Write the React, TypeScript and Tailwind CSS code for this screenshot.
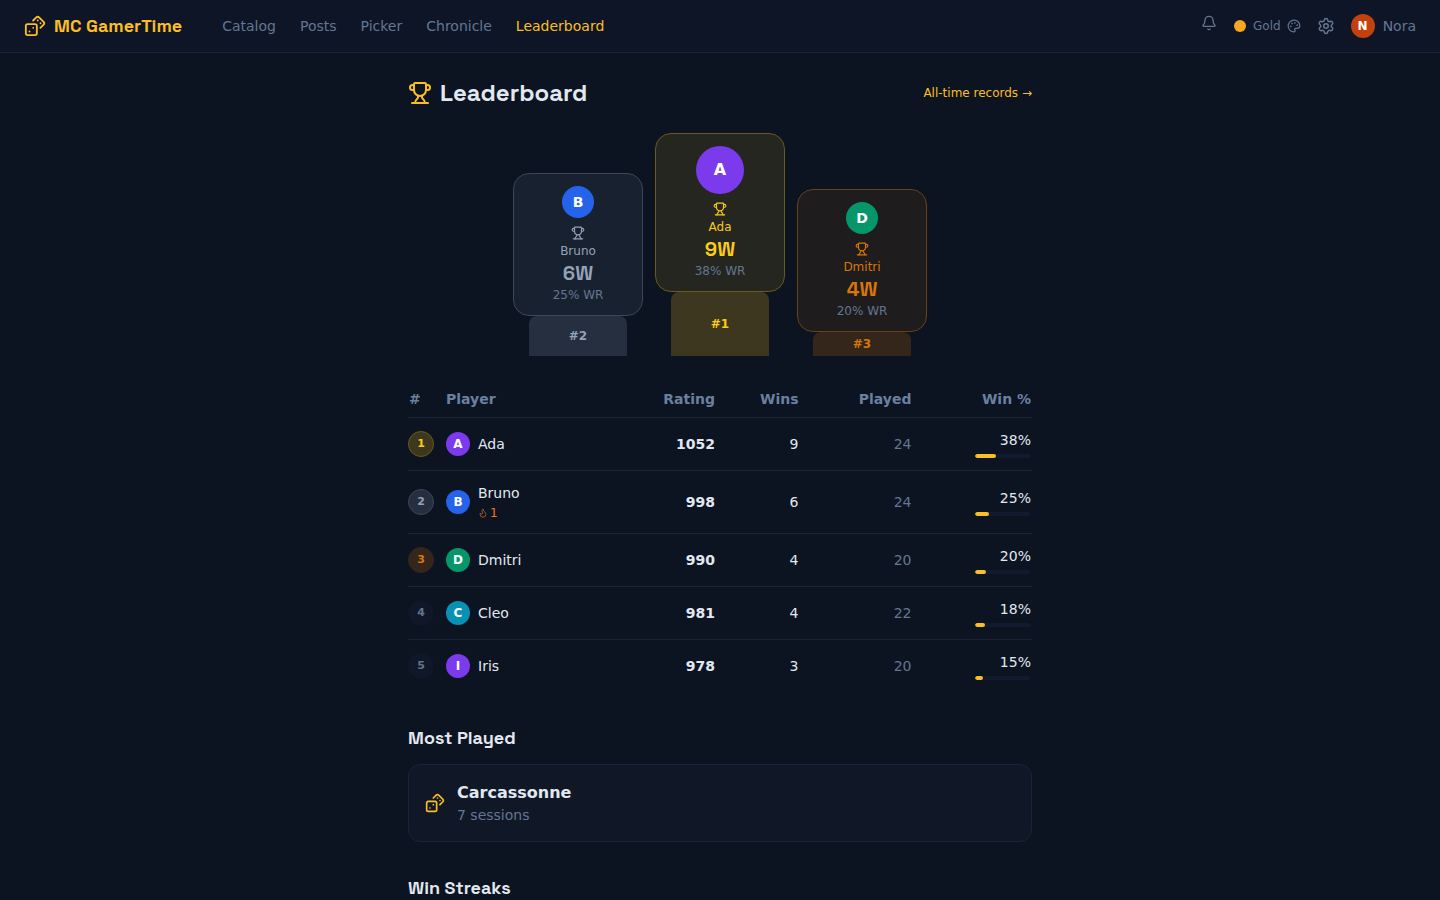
import { Bell, Dices, Flame, Palette, Settings, Trophy } from 'lucide-react';

const body = 'font-["DejaVu_Sans",sans-serif]';
const display = 'font-["Space_Grotesk","Inter",sans-serif]';

const rows = [
  { rank: 1, name: 'Ada', letter: 'A', color: 'bg-[#7c3aed]', rating: 1052, wins: 9, played: 24, pct: 38, badge: 'bg-[#3d3720] border-[#6b5a1c] text-[#facc15]' },
  { rank: 2, name: 'Bruno', letter: 'B', color: 'bg-[#2563eb]', rating: 998, wins: 6, played: 24, pct: 25, streak: 1, badge: 'bg-[#252f3f] border-[#3b4658] text-[#94a3b8]' },
  { rank: 3, name: 'Dmitri', letter: 'D', color: 'bg-[#059669]', rating: 990, wins: 4, played: 20, pct: 20, badge: 'bg-[#35261c] border-[#35261c] text-[#d97706]' },
  { rank: 4, name: 'Cleo', letter: 'C', color: 'bg-[#0891b2]', rating: 981, wins: 4, played: 22, pct: 18, badge: 'bg-[#0f1728] border-[#0f1728] text-[#64748b]' },
  { rank: 5, name: 'Iris', letter: 'I', color: 'bg-[#7c3aed]', rating: 978, wins: 3, played: 20, pct: 15, badge: 'bg-[#0f1728] border-[#0f1728] text-[#64748b]' },
];

function Podium(props: {
  letter: string;
  name: string;
  wins: string;
  wr: string;
  place: string;
  avatar: string;
  big?: boolean;
  card: string;
  tone: string;
  step: string;
  stepClass: string;
}) {
  return (
    <div className="flex w-[130px] flex-col items-center">
      <div className={`flex w-full flex-col items-center rounded-2xl border p-3 ${props.card}`}>
        <div className={`flex items-center justify-center rounded-full font-bold text-white ${props.avatar} ${props.big ? 'h-12 w-12 text-base' : 'h-8 w-8 text-sm'}`}>
          {props.letter}
        </div>
        <Trophy className={`mt-2 h-[14px] w-[14px] ${props.tone}`} strokeWidth={2} />
        <div className={`mt-[3px] text-xs leading-4 ${props.tone}`}>{props.name}</div>
        <div className={`${display} mt-[2px] text-xl font-bold leading-6 ${props.tone}`}>{props.wins}</div>
        <div className="mt-[2px] text-xs leading-4 text-[#647693]">{props.wr}</div>
      </div>
      <div className={`flex w-[98px] items-center justify-center rounded-t-lg text-xs font-bold ${props.step} ${props.stepClass}`}>
        {props.place}
      </div>
    </div>
  );
}

export default function App() {
  return (
    <div className={`min-h-screen bg-[#0c1321] text-[#e2e8f0] ${body}`}>
      <header className="flex h-[53px] items-center justify-between border-b border-[#1a2338] bg-[#0e1526] px-6">
        <div className="flex items-center">
          <div className="flex items-center gap-2">
            <Dices className="h-[22px] w-[22px] text-[#fbbf24]" />
            <span className={`${display} text-lg font-bold text-[#fbbf24]`}>MC GamerTime</span>
          </div>
          <nav className="ml-10 flex items-center gap-6 text-sm text-[#647693]">
            <span>Catalog</span>
            <span>Posts</span>
            <span>Picker</span>
            <span>Chronicle</span>
            <span className="text-[#fbbf24]">Leaderboard</span>
          </nav>
        </div>
        <div className="flex items-center text-sm text-[#647693]">
          <Bell className="mb-[6px] h-4 w-4" />
          <span className="ml-[17px] h-3 w-3 rounded-full bg-[#f5a623]" />
          <span className="ml-[7px] text-xs">Gold</span>
          <Palette className="ml-[6px] h-[14px] w-[14px]" />
          <Settings className="ml-4 h-[18px] w-[18px]" />
          <span className="ml-4 flex h-6 w-6 items-center justify-center rounded-full bg-[#c2410c] text-xs font-bold text-white">N</span>
          <span className="ml-2">Nora</span>
        </div>
      </header>

      <main className="mx-auto max-w-2xl px-6 pt-[22px]">
        <div className="flex items-center justify-between">
          <h1 className={`${display} flex items-center gap-2 text-2xl font-bold leading-9 text-[#e2e8f0]`}>
            <Trophy className="h-6 w-6 text-[#fbbf24]" />
            Leaderboard
          </h1>
          <span className="text-xs text-[#fbbf24]">All-time records →</span>
        </div>

        <div className="mt-[22px] flex items-end justify-center gap-3">
          <Podium letter="B" name="Bruno" wins="6W" wr="25% WR" place="#2" avatar="bg-[#2563eb]" card="border-[#3b4658] bg-[#182130]" tone="text-[#94a3b8]" step="h-10" stepClass="bg-[#252f3f] text-[#94a3b8]" />
          <Podium big letter="A" name="Ada" wins="9W" wr="38% WR" place="#1" avatar="bg-[#7c3aed]" card="border-[#6b5a1c] bg-[#25261f]" tone="text-[#facc15]" step="h-16" stepClass="bg-[#3d3720] text-[#facc15]" />
          <Podium letter="D" name="Dmitri" wins="4W" wr="20% WR" place="#3" avatar="bg-[#059669]" card="border-[#6a4016] bg-[#1f1c1e]" tone="text-[#d97706]" step="h-6" stepClass="bg-[#35261c] text-[#d97706]" />
        </div>

        <div className="mt-[22px] text-sm">
          <div className="grid h-[40px] grid-cols-[38px_1fr_80px_83.5px_113px_120.5px] items-center border-b border-[#1a2338] pt-[2px] font-bold text-[#6b80a0]">
            <span className="pl-px">#</span>
            <span>Player</span>
            <span className="text-right">Rating</span>
            <span className="text-right">Wins</span>
            <span className="text-right">Played</span>
            <span className="pr-px text-right">Win %</span>
          </div>
          {rows.map((r, i) => (
            <div key={r.rank} className={`grid grid-cols-[38px_1fr_80px_83.5px_113px_120.5px] items-center border-b ${r.streak ? 'h-[63px]' : 'h-[53px]'} ${i < rows.length - 1 ? 'border-[#1a2338]' : 'border-transparent'}`}>
              <span className={`flex h-[26px] w-[26px] items-center justify-center rounded-full border text-[11px] font-bold ${r.badge}`}>{r.rank}</span>
              <div className="flex items-center gap-2">
                <span className={`flex h-6 w-6 items-center justify-center rounded-full text-xs font-bold text-white ${r.color}`}>{r.letter}</span>
                <div>
                  <div className="leading-5">{r.name}</div>
                  {r.streak ? (
                    <div className="mt-[2px] flex items-center gap-[2px] text-xs leading-4 text-[#f97316]">
                      <Flame className="h-[10px] w-[10px] text-[#b45f2a]" />
                      {r.streak}
                    </div>
                  ) : null}
                </div>
              </div>
              <span className="text-right font-bold">{r.rating}</span>
              <span className="text-right">{r.wins}</span>
              <span className="text-right text-[#647693]">{r.played}</span>
              <div className="flex flex-col items-end pr-px">
                <span className="leading-5">{r.pct}%</span>
                <div className="mt-1 h-1 w-14 overflow-hidden rounded-full bg-[#111a2e]">
                  <div className="h-full rounded-full bg-[#fbbf24]" style={{ width: `${r.pct}%` }} />
                </div>
              </div>
            </div>
          ))}
        </div>

        <h2 className={`${display} mt-[31px] text-lg font-bold leading-7 text-[#e2e8f0]`}>Most Played</h2>
        <div className="mt-3 flex h-[78px] items-center gap-3 rounded-xl border border-[#1a2338] bg-[#101828] px-4">
          <Dices className="h-5 w-5 text-[#fbbf24]" />
          <div>
            <div className="text-base font-bold leading-6">Carcassonne</div>
            <div className="text-sm leading-5 text-[#647693]">7 sessions</div>
          </div>
        </div>

        <h2 className={`${display} mt-8 pb-6 text-lg font-bold leading-7 text-[#e2e8f0]`}>Win Streaks</h2>
      </main>
    </div>
  );
}
